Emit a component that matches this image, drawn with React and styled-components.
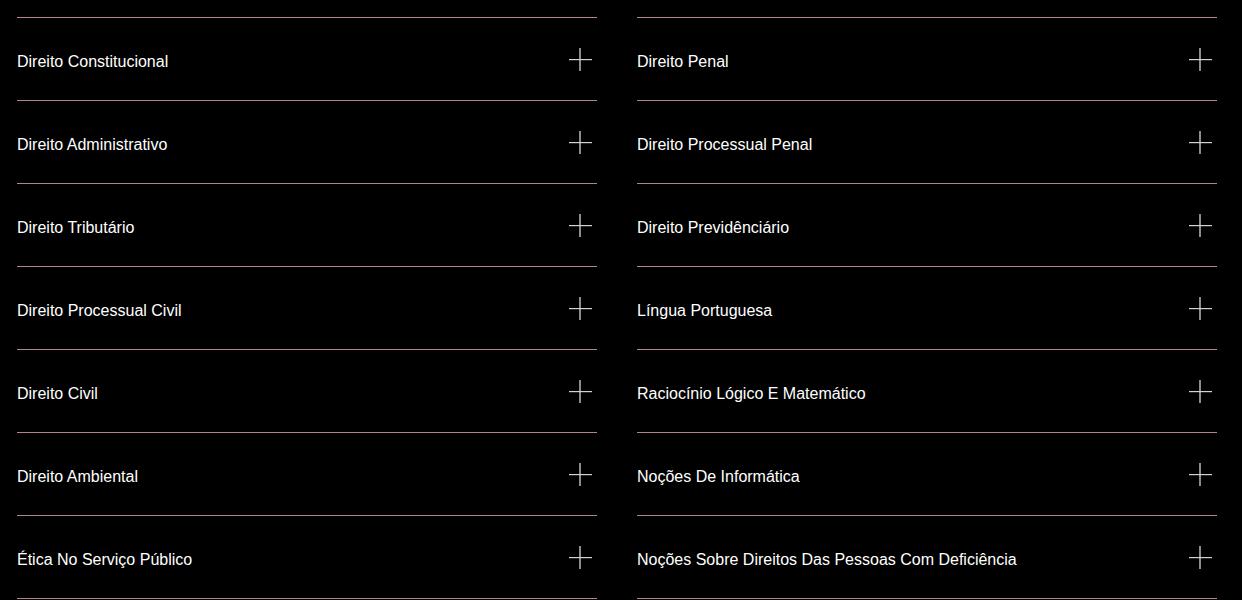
import React from 'react';
import styled, { createGlobalStyle } from 'styled-components';

const GlobalStyle = createGlobalStyle`
	html, body {
		margin: 0;
		padding: 0;
		background: #000;
	}
	body {
		font-family: "Liberation Sans", Arial, sans-serif;
		color: #fff;
	}
`;

const leftSubjects = [
	'Direito Constitucional',
	'Direito Administrativo',
	'Direito Tributário',
	'Direito Processual Civil',
	'Direito Civil',
	'Direito Ambiental',
	'Ética No Serviço Público'
];

const rightSubjects = [
	'Direito Penal',
	'Direito Processual Penal',
	'Direito Previdênciário',
	'Língua Portuguesa',
	'Raciocínio Lógico E Matemático',
	'Noções De Informática',
	'Noções Sobre Direitos Das Pessoas Com Deficiência'
];

const Page = styled.div`
	display: grid;
	grid-template-columns: 580px 580px;
	column-gap: 40px;
	padding: 17px 0 0 17px;
	width: 1242px;
	box-sizing: border-box;
`;

const Accordion = styled.div`
	display: flex;
	flex-direction: column;
	border-top: 1px solid #b4848e;
`;

const Item = styled.button`
	display: flex;
	align-items: center;
	justify-content: space-between;
	height: 83px;
	box-sizing: border-box;
	padding: 0 4px 0 0;
	margin: 0;
	background: transparent;
	border: none;
	border-bottom: 1px solid #b4848e;
	color: #fff;
	font-family: inherit;
	cursor: pointer;
	text-align: left;
`;

const Title = styled.span`
	font-size: 16px;
	line-height: 18px;
	padding-top: 6px;
`;

const PlusIcon = () => (
	<svg width="24" height="24" viewBox="0 0 24 24" aria-hidden="true">
		<rect x="10" y="1" width="2" height="23" fill="#8c8c8c" />
		<rect x="0" y="12" width="23" height="1.2" fill="#d2d2d2" />
	</svg>
);

function Column({ items }) {
	return (
		<Accordion>
			{items.map((name) => (
				<Item key={name} type="button">
					<Title>{name}</Title>
					<PlusIcon />
				</Item>
			))}
		</Accordion>
	);
}

export default function App() {
	return (
		<>
			<GlobalStyle />
			<Page>
				<Column items={leftSubjects} />
				<Column items={rightSubjects} />
			</Page>
		</>
	);
}
